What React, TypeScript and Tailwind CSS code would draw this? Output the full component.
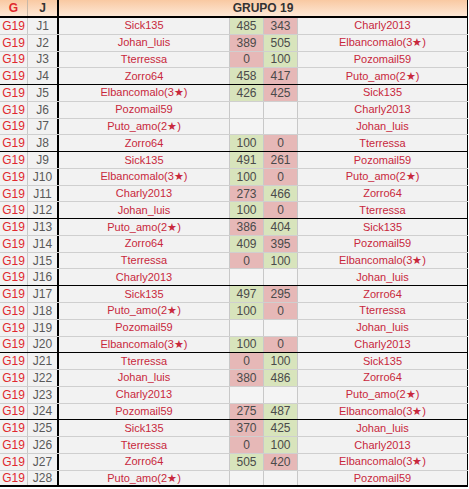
type Row = [string, string, number | null, number | null, string]

const rows: Row[] = [
  ["J1", "Sick135", 485, 343, "Charly2013"],
  ["J2", "Johan_luis", 389, 505, "Elbancomalo(3★)"],
  ["J3", "Tterressa", 0, 100, "Pozomail59"],
  ["J4", "Zorro64", 458, 417, "Puto_amo(2★)"],
  ["J5", "Elbancomalo(3★)", 426, 425, "Sick135"],
  ["J6", "Pozomail59", null, null, "Charly2013"],
  ["J7", "Puto_amo(2★)", null, null, "Johan_luis"],
  ["J8", "Zorro64", 100, 0, "Tterressa"],
  ["J9", "Sick135", 491, 261, "Pozomail59"],
  ["J10", "Elbancomalo(3★)", 100, 0, "Puto_amo(2★)"],
  ["J11", "Charly2013", 273, 466, "Zorro64"],
  ["J12", "Johan_luis", 100, 0, "Tterressa"],
  ["J13", "Puto_amo(2★)", 386, 404, "Sick135"],
  ["J14", "Zorro64", 409, 395, "Pozomail59"],
  ["J15", "Tterressa", 0, 100, "Elbancomalo(3★)"],
  ["J16", "Charly2013", null, null, "Johan_luis"],
  ["J17", "Sick135", 497, 295, "Zorro64"],
  ["J18", "Puto_amo(2★)", 100, 0, "Tterressa"],
  ["J19", "Pozomail59", null, null, "Johan_luis"],
  ["J20", "Elbancomalo(3★)", 100, 0, "Charly2013"],
  ["J21", "Tterressa", 0, 100, "Sick135"],
  ["J22", "Johan_luis", 380, 486, "Zorro64"],
  ["J23", "Charly2013", null, null, "Puto_amo(2★)"],
  ["J24", "Pozomail59", 275, 487, "Elbancomalo(3★)"],
  ["J25", "Sick135", 370, 425, "Johan_luis"],
  ["J26", "Tterressa", 0, 100, "Charly2013"],
  ["J27", "Zorro64", 505, 420, "Elbancomalo(3★)"],
  ["J28", "Puto_amo(2★)", null, null, "Pozomail59"],
]

function ScoreCell({ value, win }: { value: number | null; win: boolean }) {
  const bg = value === null ? "bg-[#f4f4f4]" : win ? "bg-[#d8e4bc]" : "bg-[#e6b8b7]"
  return (
    <div className={`w-[34px] h-full flex items-center justify-center border-r border-[#c8c8c8] text-[12px] text-[#4a4a4a] ${bg}`}>
      {value ?? ""}
    </div>
  )
}

export default function App() {
  return (
    <div className="w-[469px] h-[489px] bg-white text-[11px] leading-none" style={{ fontFamily: '"Liberation Sans", Arial, sans-serif' }}>
      {/* header */}
      <div className="flex w-[468px] h-[18px] border-b-2 border-black bg-gradient-to-b from-[#f9c9a2] to-[#fde8d6] font-bold text-[12px]">
        <div className="w-[28px] flex items-center justify-center border-r border-[#c8b8a8] text-[#e0282e]">G</div>
        <div className="w-[31px] flex items-center justify-center border-r-2 border-black text-[#333]">J</div>
        <div className="flex-1 flex items-center justify-center border-r border-black text-[#333]">GRUPO 19</div>
      </div>

      {/* matches */}
      {rows.map(([j, home, a, b, away], i) => {
        const last = i === rows.length - 1
        const groupEnd = (i + 1) % 4 === 0
        const border = last ? "border-b-2 border-black" : groupEnd ? "border-b border-black" : "border-b border-[#cfcfcf]"
        const homeWin = a !== null && b !== null && a > b
        return (
          <div key={j} className={`flex w-[468px] h-[16.78px] bg-[#f2f2f2] ${border}`}>
            <div className="w-[28px] h-full flex items-center justify-center border-r border-[#c8c8c8] text-[12px] text-[#e0282e]">G19</div>
            <div className="w-[31px] h-full flex items-center justify-center border-r-2 border-black text-[12px] text-[#595959]">{j}</div>
            <div className="w-[171px] h-full flex items-center justify-center border-r border-[#c8c8c8] text-[#c8283c]">{home}</div>
            <ScoreCell value={a} win={homeWin} />
            <ScoreCell value={b} win={!homeWin} />
            <div className="w-[170px] h-full flex items-center justify-center border-r border-black text-[#c8283c]">{away}</div>
          </div>
        )
      })}
    </div>
  )
}
